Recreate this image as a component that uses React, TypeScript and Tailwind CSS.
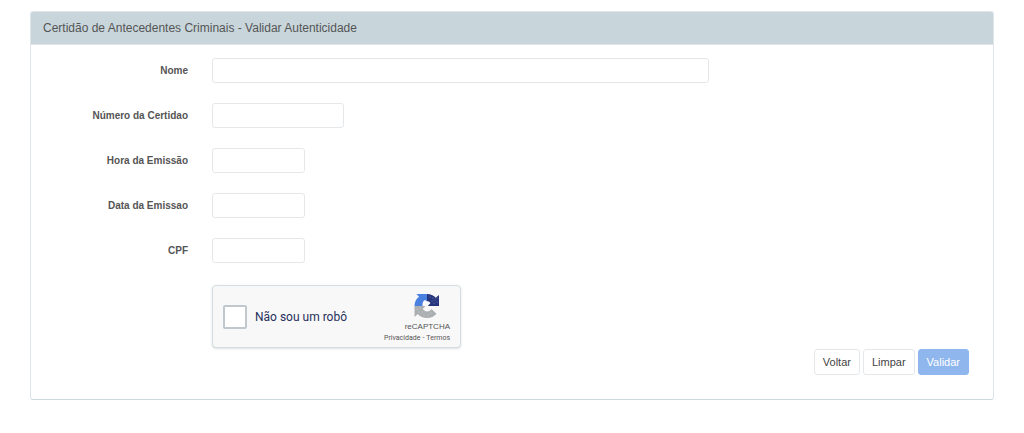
import type { FormEvent } from 'react';

const fields = [
  { id: 'nome', label: 'Nome', width: 'w-[497px]' },
  { id: 'numero', label: 'Número da Certidao', width: 'w-[132px]' },
  { id: 'hora', label: 'Hora da Emissão', width: 'w-[93px]' },
  { id: 'data', label: 'Data da Emissao', width: 'w-[93px]' },
  { id: 'cpf', label: 'CPF', width: 'w-[93px]' },
];

function RecaptchaLogo() {
  return (
    <svg width="26" height="26" viewBox="0 0 26 26" aria-hidden="true">
      {/* blue arrow */}
      <path fill="#4a80e0" d="M2.5 1H13v7.2L10.8 7C9 8 8.300 10 8.500 13H.5C.5 9 2 6 5 3.800z" />
      {/* navy arrow */}
      <path fill="#27357c" d="M13 1c3.500 0 6.500 1.300 8.700 3.700L25 2v11H13.800l2.700-3C15.600 8.800 14.500 8.200 13 8.200z" />
      {/* grey arrow */}
      <path fill="#abafb2" d="M.5 13h11l-2.700 2.800c1 1.800 2.500 2.700 4.200 2.700 2 0 3.500-1 4.500-2.500l5 4.700C20.200 23.500 17 25 13 25c-3.800 0-7-1.500-9.200-4L.5 24z" />
      <g fill="#8fa0d8">
        <circle cx="16" cy="4" r=".5" />
        <circle cx="19" cy="5" r=".5" />
        <circle cx="18" cy="8" r=".5" />
        <circle cx="21" cy="7" r=".5" />
        <circle cx="23" cy="5" r=".5" />
        <circle cx="23" cy="9" r=".5" />
        <circle cx="20" cy="10" r=".5" />
      </g>
      <g fill="#d5d8da">
        <circle cx="3" cy="16" r=".5" />
        <circle cx="6" cy="15" r=".5" />
        <circle cx="5" cy="19" r=".5" />
        <circle cx="8" cy="19" r=".5" />
        <circle cx="10" cy="22" r=".5" />
        <circle cx="14" cy="22" r=".5" />
        <circle cx="17" cy="20" r=".5" />
      </g>
    </svg>
  );
}

function Recaptcha() {
  return (
    <div className="flex h-[63px] w-[249px] items-center rounded-sm border border-[#d3dde3] bg-[#f8f8f8] pr-[10px] pl-[10px] shadow-sm">
      <input
        id="robo"
        type="checkbox"
        className="h-6 w-6 appearance-none rounded-xs border-2 border-[#c0c8cd] bg-white checked:bg-[#4a86e0]"
      />
      <label htmlFor="robo" className="ml-2 font-[Roboto,sans-serif] text-xs text-[#27305c]">
        Não sou um robô
      </label>
      <div className="ml-auto flex flex-col items-end text-[#555]">
        <div className="flex flex-col items-center">
          <RecaptchaLogo />
          <span className="font-['Liberation_Sans',Arial,sans-serif] text-[8px] leading-4">reCAPTCHA</span>
        </div>
        <div className="flex gap-[2px] font-[Roboto,sans-serif] text-[7px] leading-[6px]">
          <a href="#privacidade">Privacidade</a>
          <span>-</span>
          <a href="#termos">Termos</a>
        </div>
      </div>
    </div>
  );
}

export default function App() {
  const handleSubmit = (e: FormEvent) => e.preventDefault();

  return (
    <main className="bg-white px-[30px] py-[11px] font-['Liberation_Sans',Arial,sans-serif]">
      <section className="rounded-[3px] border border-[#dfe5e8] border-b-[#cbd8df]">
        <h1 className="rounded-t-[2px] border-b border-[#dfe5e8] bg-[#c8d6dc] px-3 text-xs leading-8 text-[#555]">
          Certidão de Antecedentes Criminais - Validar Autenticidade
        </h1>

        <form onSubmit={handleSubmit} className="px-6 pt-[13px] pb-6">
          <div className="flex flex-col gap-5">
            {fields.map((field) => (
              <div key={field.id} className="flex items-center gap-6">
                <label htmlFor={field.id} className="w-[133px] shrink-0 text-right text-[10px] font-bold text-[#555]">
                  {field.label}
                </label>
                <input
                  id={field.id}
                  type="text"
                  className={`h-[25px] rounded-[3px] border border-[#e5e8eb] px-2 text-[11px] text-[#555] outline-none focus:border-[#8fb7ee] ${field.width}`}
                />
              </div>
            ))}
          </div>

          <div className="mt-[22px] pl-[157px]">
            <Recaptcha />
          </div>

          <div className="flex justify-end gap-[3px] pt-px">
            <button type="button" className="h-[26px] rounded-[3px] border border-[#e5e8eb] px-2 text-[11px] text-[#444]">
              Voltar
            </button>
            <button type="reset" className="h-[26px] rounded-[3px] border border-[#e5e8eb] px-2 text-[11px] text-[#444]">
              Limpar
            </button>
            <button type="submit" className="h-[26px] rounded-[3px] border border-[#8fb7ee] bg-[#8fb7ee] px-2 text-[11px] text-white">
              Validar
            </button>
          </div>
        </form>
      </section>
    </main>
  );
}
